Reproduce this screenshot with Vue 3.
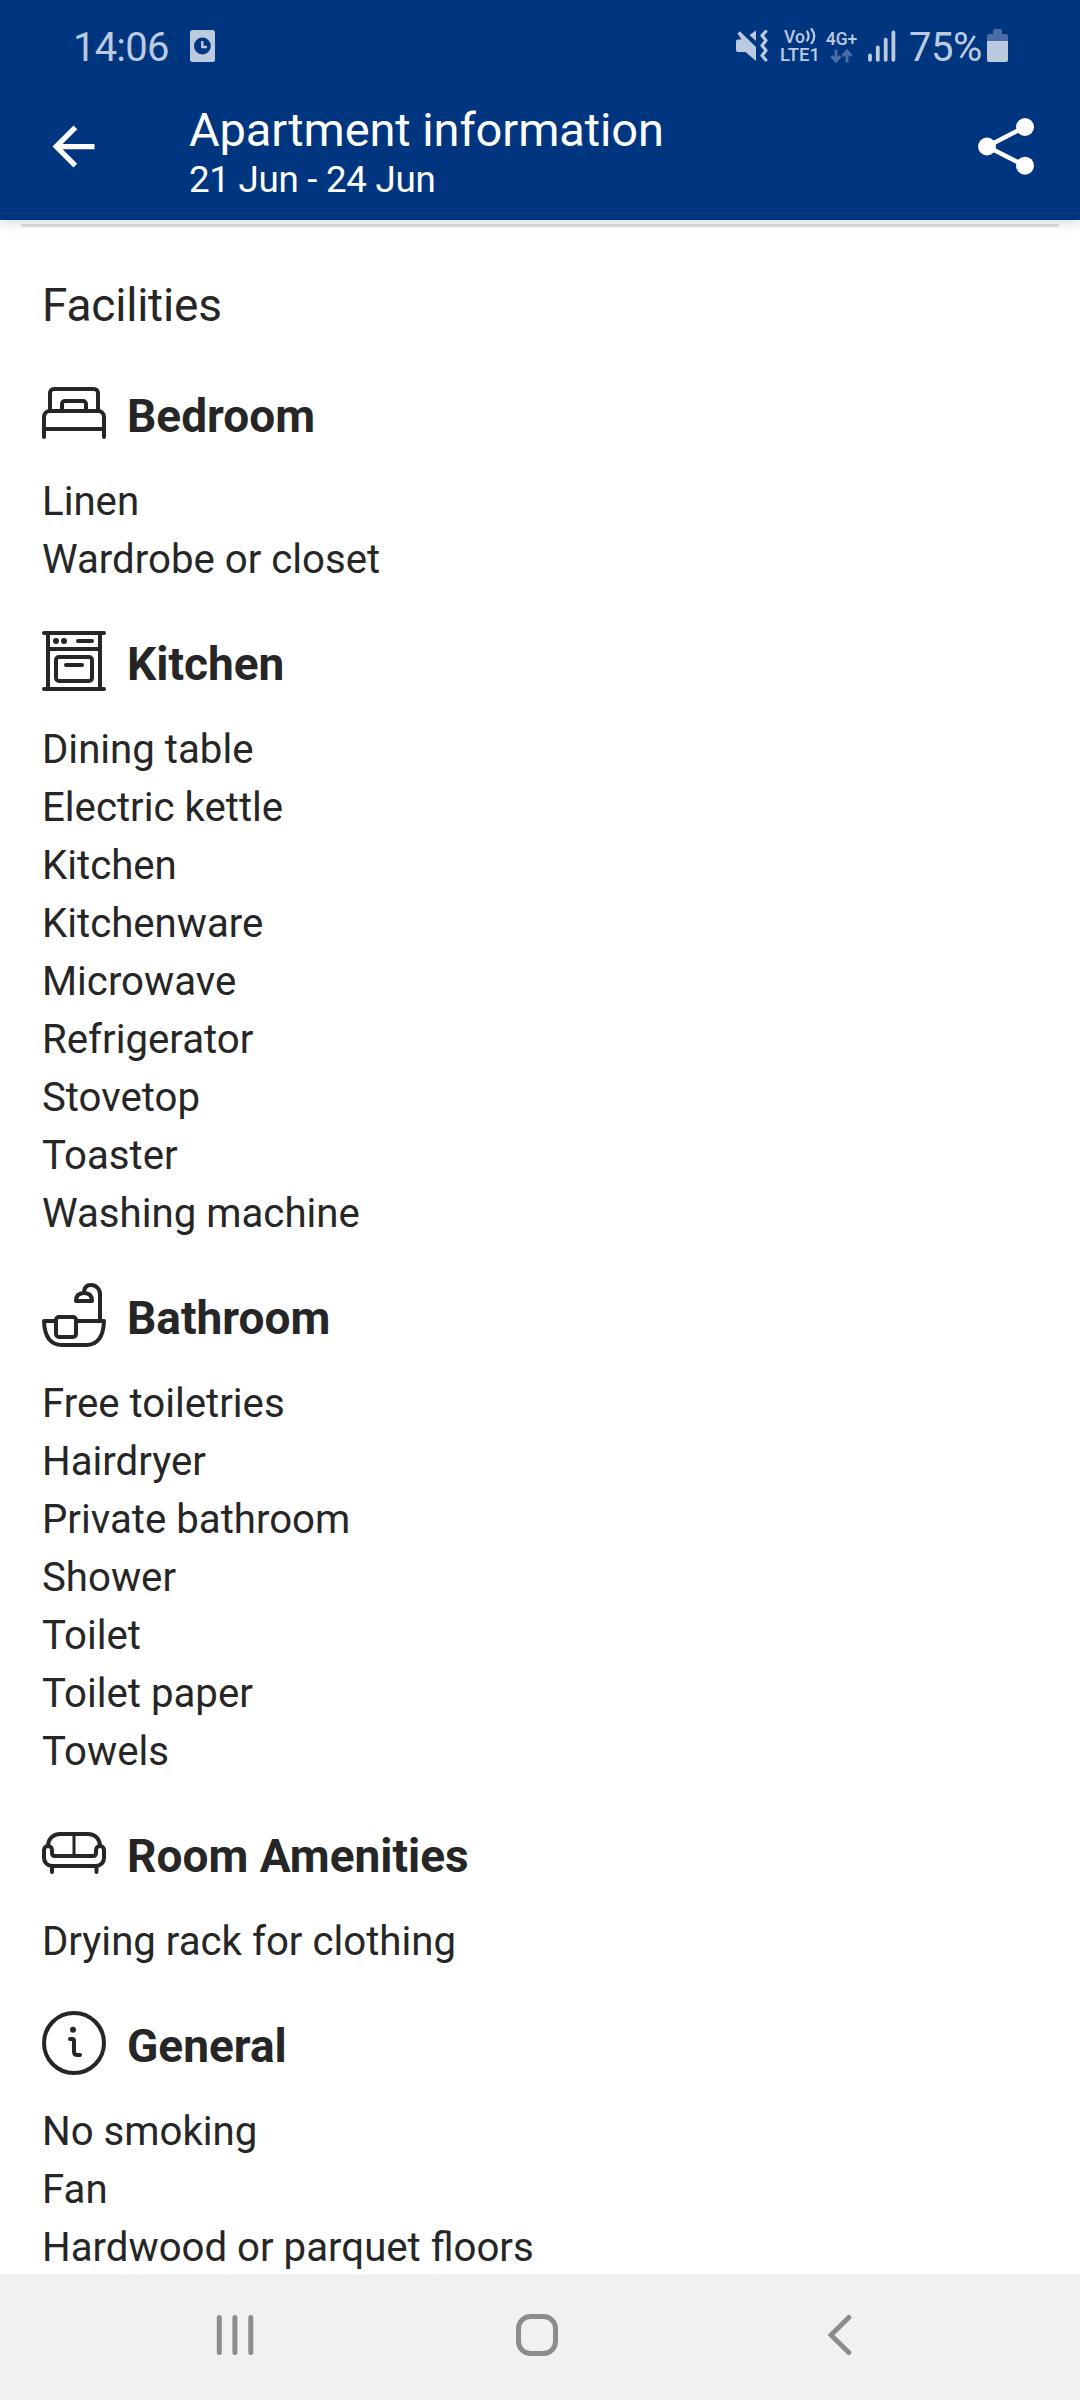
<script setup>
const sections = [
  { title: 'Bedroom', icon: 'bed', items: ['Linen', 'Wardrobe or closet'] },
  {
    title: 'Kitchen',
    icon: 'oven',
    items: ['Dining table', 'Electric kettle', 'Kitchen', 'Kitchenware', 'Microwave', 'Refrigerator', 'Stovetop', 'Toaster', 'Washing machine'],
  },
  {
    title: 'Bathroom',
    icon: 'bath',
    items: ['Free toiletries', 'Hairdryer', 'Private bathroom', 'Shower', 'Toilet', 'Toilet paper', 'Towels'],
  },
  { title: 'Room Amenities', icon: 'sofa', items: ['Drying rack for clothing'] },
  { title: 'General', icon: 'info', items: ['No smoking', 'Fan', 'Hardwood or parquet floors'] },
]
</script>

<template>
  <div class="screen">
    <header class="top">
      <div class="status">
        <span class="time">14:06</span>
        <svg class="doc" width="25" height="32" viewBox="0 0 25 32">
          <rect width="25" height="32" rx="2.5" fill="#bccae0" />
          <circle cx="12.4" cy="16" r="8.4" fill="#00357f" />
          <path d="M12.3 11v6h4.6" fill="none" stroke="#bccae0" stroke-width="2.4" />
        </svg>
        <span class="spacer"></span>
        <svg class="mute" width="32" height="32" viewBox="0 0 32 32">
          <path d="M0 11.500Q0 9.500 2 9.500H5.500L1.500 3.500 3.800 1.200 20 17V31L9.500 22H2Q0 22 0 20Z M13.500 5L20 .5V11Z" fill="#bccae0" />
          <path d="M29.800 1.500L26 5.500L30 10.500L26 15.500L30 20.500L26 25.500L29.800 30" fill="none" stroke="#bccae0" stroke-width="3.200" stroke-linejoin="round" stroke-linecap="round" />
        </svg>
        <div class="volte"><span class="vo">Vo<svg width="10" height="16" viewBox="0 0 10 16"><path d="M1.200 3.500Q4 8 1.200 12.500M5.500 1Q11 8 5.500 15.500" fill="none" stroke="#bccae0" stroke-width="2.200" stroke-linecap="round" /></svg></span><span class="lte">LTE1</span></div>
        <div class="net">
          <span>4G+</span>
          <svg width="23" height="14" viewBox="0 0 23 14">
            <path d="M6 0.500V11M1.500 7L6 12L10.500 7M17 13.500V3M12.500 7L17 2L21.500 7" fill="none" stroke="#4a6da5" stroke-width="3" />
          </svg>
        </div>
        <svg class="bars" width="28" height="32" viewBox="0 0 28 32">
          <path d="M2 25.500V29.800M9.800 17.300V29.800M17.700 9.600V29.800M25.400 2.500V29.800" stroke="#bccae0" stroke-width="3.800" stroke-linecap="round" />
        </svg>
        <span class="pct">75%</span>
        <svg class="battery" width="21" height="33" viewBox="0 0 21 33">
          <path d="M6 5V2Q6 0 8 0H13Q15 0 15 2V5H19Q21 5 21 7V12H0V7Q0 5 2 5Z" fill="#4a6da5" />
          <path d="M0 12H21V31Q21 33 19 33H2Q0 33 0 31Z" fill="#bccae0" />
        </svg>
      </div>
      <div class="bar">
        <svg class="back" width="63" height="63" viewBox="0 0 24 24">
          <path d="M20 11H7.830l5.590-5.590L12 4l-8 8 8 8 1.410-1.410L7.830 13H20z" fill="#fff" />
        </svg>
        <div class="titles">
          <h1>Apartment information</h1>
          <p>21 Jun - 24 Jun</p>
        </div>
        <svg class="share" width="56" height="57" viewBox="0 0 56 57">
          <path d="M47 9L9 28.500L47 47.700" fill="none" stroke="#fff" stroke-width="4.400" />
          <circle cx="9" cy="28.500" r="9" fill="#fff" />
          <circle cx="47" cy="9" r="9" fill="#fff" />
          <circle cx="47" cy="47.700" r="9" fill="#fff" />
        </svg>
      </div>
    </header>

    <main class="content">
      <div class="divider"></div>
      <h2>Facilities</h2>
      <section v-for="s in sections" :key="s.title">
        <div class="head">
          <svg class="icon" width="64" height="64" viewBox="0 0 64 64">
            <template v-if="s.icon === 'bed'">
              <path d="M8 28V12a4 4 0 0 1 4-4H52a4 4 0 0 1 4 4V28" />
              <path d="M20 28V23a3 3 0 0 1 3-3H41a3 3 0 0 1 3 3V28" />
              <path d="M2 56V36a6 6 0 0 1 6-6H56a6 6 0 0 1 6 6V56M2 48H62" />
            </template>
            <template v-else-if="s.icon === 'oven'">
              <path d="M2 4H62M2 60H62M6 4V60M58 4V60M6 20H58M36 12H50M24 36H40" />
              <rect x="14" y="28" width="36" height="24" rx="3" />
              <circle class="dot" cx="14" cy="12" r="3" />
              <circle class="dot" cx="22" cy="12" r="3" />
            </template>
            <template v-else-if="s.icon === 'bath'">
              <path d="M58 38V11a9 9 0 0 0-9-9Q42.500 2 42 9" />
              <path d="M34 18H50Q50 10 42 10T34 18Z" />
              <path d="M14 38H2C2.500 53 8 62 20 62H44C56 62 61.500 53 62 38H34" />
              <rect x="14" y="34" width="20" height="20" rx="3" />
            </template>
            <template v-else-if="s.icon === 'sofa'">
              <path d="M6 25C6 18 11 13 18 13H46C53 13 58 18 58 25" />
              <path class="thin" d="M32 13V35" />
              <path d="M13 35H51Q54 35 54 32V29a4 4 0 0 1 8 0V37a8 8 0 0 1-8 8H10a8 8 0 0 1-8-8V29a4 4 0 0 1 8 0V32Q10 35 13 35Z" />
              <path d="M10 46V51M54.500 46V51" />
            </template>
            <template v-else>
              <circle cx="32" cy="32" r="30" />
              <circle class="dot" cx="31" cy="18.800" r="3" />
              <path d="M28 28H30.500Q32 28 32 29.500V40.500Q32 44 35.500 44H38" />
            </template>
          </svg>
          <h3>{{ s.title }}</h3>
        </div>
        <ul>
          <li v-for="item in s.items" :key="item">{{ item }}</li>
        </ul>
      </section>
    </main>

    <nav class="nav">
      <svg class="recents" width="38" height="42" viewBox="0 0 38 42">
        <path d="M3.300 3.500V38.500M18.900 3.500V38.500M34.800 3.500V38.500" />
      </svg>
      <svg class="home" width="42" height="42" viewBox="0 0 42 42">
        <rect x="2.500" y="2.500" width="37" height="37" rx="12" />
      </svg>
      <svg width="24" height="42" viewBox="0 0 24 42">
        <path d="M20.800 3.500L3 21L20.800 38.500" />
      </svg>
    </nav>
  </div>
</template>

<style>
body { margin: 0; background: #fff; }
</style>

<style scoped>
.screen {
  width: 1080px;
  height: 2400px;
  display: flex;
  flex-direction: column;
  overflow: hidden;
  background: #fff;
  color: #262626;
  font-family: Roboto, "Liberation Sans", sans-serif;
}
h1, h2, h3, p, ul { margin: 0; padding: 0; font-weight: 400; }
svg { flex: none; display: block; }
.top {
  flex: none;
  height: 220px;
  background: #00357f;
  color: #fff;
  box-shadow: 0 3px 12px rgba(0, 0, 0, 0.14);
  z-index: 1;
}
.status {
  height: 62px;
  padding: 0 72px 0 73px;
  display: flex;
  align-items: flex-end;
  color: #bccae0;
}
.time, .pct { font-size: 40px; line-height: 47px; margin-bottom: -9px; white-space: nowrap; }
.time { width: 99px; letter-spacing: -0.8px; }
.doc { margin-left: 17.500px; }
.spacer { flex: 1; }
.volte { width: 40px; margin-left: 12px; display: flex; flex-direction: column; align-items: center; font-weight: 500; font-size: 18.500px; }
.volte span { line-height: 18px; height: 18px; white-space: nowrap; }
.volte .vo { display: flex; gap: 1px; font-size: 17.500px; }
.volte .lte { margin-bottom: -2px; }
.net { width: 31px; margin-left: 6px; margin-bottom: -1px; display: flex; flex-direction: column; align-items: center; font-weight: 500; font-size: 17.500px; line-height: 18px; gap: 1px; }
.bars { margin-left: 11px; }
.pct { width: 73px; margin-left: 13px; letter-spacing: -0.500px; }
.battery { margin-left: 5px; }
.bar {
  height: 158px;
  display: flex;
  align-items: flex-start;
  padding: 0 46px 0 42px;
}
.back { margin-top: 53px; }
.titles { flex: 1; margin: 40px 0 0 84px; }
.titles h1 { font-size: 47px; line-height: 56px; letter-spacing: -0.1px; }
.titles p { font-size: 36.750px; line-height: 44px; letter-spacing: -0.3px; }
.share { margin-top: 56px; }
.content { flex: 1; min-height: 0; overflow: hidden; padding: 0 42px; }
.divider { height: 3px; margin: 4px -21px 0; background: #e0e0e0; }
h2 { font-size: 46px; line-height: 54px; margin-top: 51px; height: 62px; letter-spacing: -0.2px; }
.head { display: flex; align-items: flex-start; gap: 21px; height: 132px; }
.icon { margin-top: 41px; fill: none; stroke: #262626; stroke-width: 4; stroke-linecap: round; stroke-linejoin: round; }
.icon .dot { fill: #262626; stroke: none; }
.icon .thin { stroke-width: 3; }
h3 { font-size: 46px; line-height: 54px; margin-top: 49px; font-weight: 700; }
ul { list-style: none; }
li { height: 58px; font-size: 40.200px; line-height: 60px; white-space: nowrap; }
.nav {
  flex: none;
  height: 126px;
  box-sizing: border-box;
  padding: 40px 0 0 216px;
  display: flex;
  align-items: flex-start;
  background: #f1f1f1;
}
.nav svg { fill: none; stroke: #8c8c8c; stroke-width: 5; stroke-linecap: round; }
.recents { margin-right: 262px; }
.home { margin-right: 270px; }
</style>
